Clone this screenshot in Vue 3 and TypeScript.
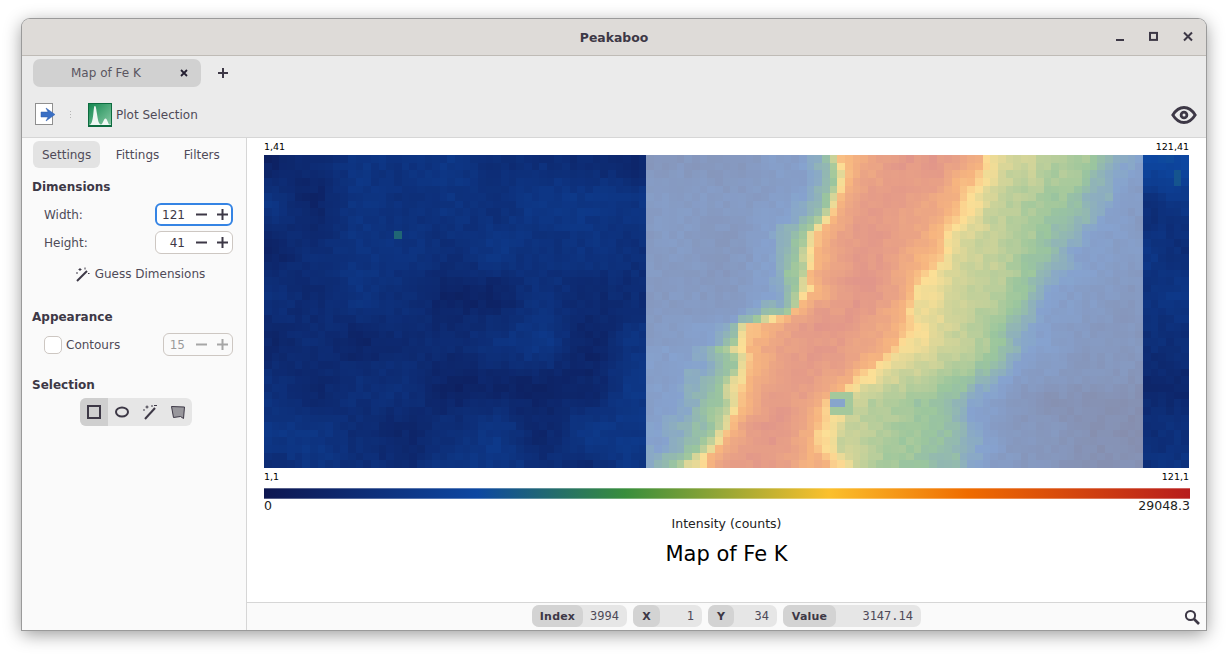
<template>
  <div class="desktop">
    <div class="window">
      <header class="titlebar">
        <span class="title">Peakaboo</span>
        <div class="wm-buttons">
          <svg width="12" height="12" viewBox="0 0 12 12"><rect x="2" y="8" width="8" height="2" fill="#3d3846" /></svg>
          <svg width="12" height="12" viewBox="0 0 12 12"><rect x="2" y="1.900" width="7" height="7" fill="none" stroke="#3d3846" stroke-width="2" /></svg>
          <svg width="12" height="12" viewBox="0 0 12 12"><path d="M2 1.500l8 8M10 1.500l-8 8" stroke="#3d3846" stroke-width="2" fill="none" /></svg>
        </div>
      </header>

      <div class="tabbar">
        <div class="doc-tab">
          <span class="doc-tab-label">Map of Fe K</span>
          <svg class="doc-tab-close" width="10" height="10" viewBox="0 0 10 10"><path d="M2 2l6 6M8 2l-6 6" stroke="#241f31" stroke-width="1.800" fill="none" /></svg>
        </div>
        <svg class="new-tab" width="12" height="12" viewBox="0 0 12 12"><path d="M6 1v10M1 6h10" stroke="#3d3846" stroke-width="2" fill="none" /></svg>
      </div>

      <div class="toolbar">
        <svg class="export-icon" width="21" height="23" viewBox="0 0 21 23">
          <rect x="0.500" y="0.500" width="17" height="21" fill="#fff" stroke="#8f8f8f" />
          <path d="M6 9H13L11 5L20 11.500L11 18L13 14H6z" fill="#3a6fc4" stroke="#2f5fae" stroke-width="0.500" />
        </svg>
        <div class="tool-sep"><i /><i /><i /></div>
        <svg class="plot-icon" width="24" height="24" viewBox="0 0 24 24">
          <defs>
            <linearGradient id="plotBg" x1="0" y1="0" x2="1" y2="1">
              <stop offset="0" stop-color="#12874f" />
              <stop offset="1" stop-color="#8acba6" />
            </linearGradient>
          </defs>
          <rect x="0.500" y="0.500" width="23" height="23" fill="url(#plotBg)" stroke="#0d6b3f" />
          <path d="M1 22C3.500 22 4.500 18 5.300 11S6 3 7 3s1.200 3 2 8 1.500 10.500 4 10.500c2 0 2.500-6 4.500-6s2.500 6 4 6H23v.5z" fill="#fff" opacity="0.900" />
          <rect x="0" y="22" width="24" height="2" fill="#0d6b3f" />
        </svg>
        <span class="plot-label">Plot Selection</span>
        <svg class="eye-icon" width="26" height="20" viewBox="0 0 26 20">
          <path d="M1.800 10C5 4.800 8.800 2.500 13 2.500s8 2.300 11.200 7.500C21 15.200 17.200 17.500 13 17.500S5 15.200 1.800 10z" fill="none" stroke="#3d3846" stroke-width="2.800" />
          <circle cx="13" cy="10" r="2.900" fill="none" stroke="#3d3846" stroke-width="2.800" />
        </svg>
      </div>

      <div class="content">
        <aside class="sidebar">
          <nav class="side-tabs">
            <button v-for="(tab, i) in sideTabs" :key="tab" class="side-tab" :class="{ active: i === 0 }">{{ tab }}</button>
          </nav>

          <h3 class="dim-head">Dimensions</h3>
          <div class="form-row first-row">
            <label>Width:</label>
            <div class="spinner focused">
              <span class="spin-value">121</span>
              <svg class="spin-btn" viewBox="0 0 11 11"><path d="M0 5.500h11" /></svg>
              <svg class="spin-btn" viewBox="0 0 11 11"><path d="M0 5.500h11M5.500 0v11" /></svg>
            </div>
          </div>
          <div class="form-row second-row">
            <label>Height:</label>
            <div class="spinner">
              <span class="spin-value">41</span>
              <svg class="spin-btn" viewBox="0 0 11 11"><path d="M0 5.500h11" /></svg>
              <svg class="spin-btn" viewBox="0 0 11 11"><path d="M0 5.500h11M5.500 0v11" /></svg>
            </div>
          </div>
          <button class="guess-btn">
            <svg width="15" height="15" viewBox="0 0 15 15">
              <path d="M2 14L12 4" stroke="#3d3846" stroke-width="2" fill="none" />
              <path d="M5 1v3M3.500 2.500h3M1 6h2M10 0.500v2M13 6.500h1.500" stroke="#3d3846" stroke-width="1" fill="none" />
            </svg>
            Guess Dimensions
          </button>

          <h3 class="appear-head">Appearance</h3>
          <div class="form-row contour-row">
            <span class="check-wrap"><span class="checkbox" />Contours</span>
            <div class="spinner disabled">
              <span class="spin-value">15</span>
              <svg class="spin-btn" viewBox="0 0 11 11"><path d="M0 5.500h11" /></svg>
              <svg class="spin-btn" viewBox="0 0 11 11"><path d="M0 5.500h11M5.500 0v11" /></svg>
            </div>
          </div>

          <h3 class="select-head">Selection</h3>
          <div class="select-tools">
            <button class="select-tool active">
              <svg width="16" height="16" viewBox="0 0 16 16"><rect x="2" y="2" width="12" height="12" fill="none" stroke="#3d3846" stroke-width="2" /></svg>
            </button>
            <button class="select-tool">
              <svg width="16" height="16" viewBox="0 0 16 16"><ellipse cx="8" cy="8" rx="6" ry="4.500" fill="none" stroke="#3d3846" stroke-width="2" /></svg>
            </button>
            <button class="select-tool">
              <svg width="16" height="16" viewBox="0 0 16 16">
                <path d="M3 15L13 4" stroke="#3d3846" stroke-width="2" fill="none" />
                <path d="M5 1.500v3M3.500 3h3M1 6h2M10 1v2M12 1.500h3" stroke="#3d3846" stroke-width="1" fill="none" />
              </svg>
            </button>
            <button class="select-tool">
              <svg width="16" height="16" viewBox="0 0 16 16"><path d="M1.500 2.500l13 .5-1 11.500-3-2-7 1z" fill="#98979c" stroke="#3d3846" stroke-width="1" /></svg>
            </button>
          </div>
        </aside>

        <main class="main">
          <div class="plot">
            <div class="corner-row top"><span>1,41</span><span>121,41</span></div>
            <canvas ref="mapCanvas" class="map" width="925" height="313" />
            <div class="corner-row bottom"><span>1,1</span><span>121,1</span></div>
            <div class="colorbar" />
            <div class="scale-row"><span>0</span><span>29048.3</span></div>
            <div class="axis-title">Intensity (counts)</div>
            <div class="map-title">Map of Fe K</div>
          </div>

          <footer class="statusbar">
            <span />
            <div class="readouts">
              <div v-for="item in readouts" :key="item.label" class="readout" :style="{ width: item.width + 'px' }">
                <b :style="{ width: item.labelWidth + 'px' }">{{ item.label }}</b>
                <span>{{ item.value }}</span>
              </div>
            </div>
            <svg class="search-icon" width="16" height="16" viewBox="0 0 16 16">
              <circle cx="6.500" cy="6.500" r="4.600" fill="none" stroke="#3d3846" stroke-width="2" />
              <path d="M10 10l5 5" stroke="#3d3846" stroke-width="2.600" fill="none" />
            </svg>
          </footer>
        </main>
      </div>
    </div>
  </div>
</template>

<script setup lang="ts">
import { onMounted, ref } from 'vue'

const sideTabs = ['Settings', 'Fittings', 'Filters']

const readouts = [
  { label: 'Index', value: '3994', width: 95, labelWidth: 51 },
  { label: 'X', value: '1', width: 69, labelWidth: 27 },
  { label: 'Y', value: '34', width: 69, labelWidth: 26 },
  { label: 'Value', value: '3147.14', width: 138, labelWidth: 53 },
]

const mapCanvas = ref<HTMLCanvasElement | null>(null)

type Stop = [number, number]
type Rgb = [number, number, number]

const COLS = 121
const ROWS = 41
const CELL_W = 925 / COLS
const CELL_H = 313 / ROWS

// colour scale used by the map, same stops as the .colorbar gradient
const spectrum: [number, Rgb][] = [
  [0, [13, 22, 80]],
  [0.23, [13, 71, 161]],
  [0.39, [56, 142, 60]],
  [0.61, [251, 192, 45]],
  [0.76, [239, 108, 0]],
  [1, [183, 28, 28]],
]

// hot band edges in page pixels, by page y
const leftEdge: Stop[] = [
  [155, 845], [200, 838], [215, 830], [235, 815], [260, 815], [275, 810], [290, 812], [305, 803],
  [316, 785], [325, 752], [345, 748], [360, 752], [385, 738], [420, 730], [440, 724], [455, 707], [468, 700],
]
const rightEdge: Stop[] = [
  [155, 985], [200, 955], [250, 938], [300, 915], [350, 900], [380, 860], [400, 835], [440, 820], [468, 825],
]
const fadeEdge: Stop[] = [
  [155, 1110], [200, 1085], [250, 1060], [320, 1020], [400, 975], [468, 975],
]

const lerpTable = (table: Stop[], x: number): number => {
  if (x <= table[0][0]) return table[0][1]
  for (let i = 1; i < table.length; i++) {
    if (x <= table[i][0]) {
      const [x0, y0] = table[i - 1]
      const [x1, y1] = table[i]
      return y0 + ((y1 - y0) * (x - x0)) / (x1 - x0)
    }
  }
  return table[table.length - 1][1]
}

const hash = (a: number, b: number): number => {
  const s = Math.sin(a * 127.1 + b * 311.7) * 43758.5453
  return s - Math.floor(s)
}

const smoothNoise = (x: number, y: number): number => {
  const xi = Math.floor(x)
  const yi = Math.floor(y)
  const fx = x - xi
  const fy = y - yi
  const u = fx * fx * (3 - 2 * fx)
  const v = fy * fy * (3 - 2 * fy)
  const top = hash(xi, yi) * (1 - u) + hash(xi + 1, yi) * u
  const bottom = hash(xi, yi + 1) * (1 - u) + hash(xi + 1, yi + 1) * u
  return top * (1 - v) + bottom * v
}

const intensity = (col: number, row: number): number => {
  if (col === 17 && row === 10) return 0.3
  if (col === 119 && (row === 2 || row === 3)) return 0.26
  if ((col === 74 || col === 75) && row === 32) return 0.24
  if (col >= 74 && col <= 76 && row >= 31 && row <= 33) return 0.41

  const jitter = hash(col, row) - 0.5
  const patch = smoothNoise(col / 6, row / 6) - 0.5

  // dark background either side of the sample
  if (col < 50) return 0.11 + patch * 0.1 + jitter * 0.03
  if (col >= 115) return 0.115 + patch * 0.08 + jitter * 0.03 + Math.max(0, 8 - row) * 0.012

  const px = 264 + (col + 0.5) * CELL_W + (smoothNoise(col / 2.5, row / 2.5) - 0.5) * 16
  const py = 155 + (row + 0.5) * CELL_H
  const left = lerpTable(leftEdge, py)
  const right = lerpTable(rightEdge, py)
  const fade = lerpTable(fadeEdge, py)

  let t: number
  if (px < left) {
    // the rise is steeper beside the upper part of the band
    const d = (left - px) * (py < 345 ? 1.5 : 1)
    t = lerpTable([[0, 0.62], [8, 0.55], [16, 0.42], [40, 0.3], [70, 0.2], [130, 0.15]], d)
  } else if (px <= right) {
    const u = (px - left) / (right - left)
    t = 0.69 + 0.22 * Math.pow(Math.sin(Math.PI * u), 0.6)
  } else {
    t = lerpTable([[0, 0.67], [0.08, 0.6], [0.3, 0.51], [0.6, 0.45], [0.85, 0.4], [1, 0.31], [1.3, 0.2], [1.8, 0.14]], (px - right) / (fade - right))
    // shoulder turns green towards the bottom of the map
    if (py > 370 && px > right + 20) t -= Math.min(0.07, (py - 370) * 0.002)
  }
  return t + patch * 0.05 + jitter * 0.05
}

const colourAt = (t: number): Rgb => {
  const v = Math.min(1, Math.max(0, t))
  for (let i = 1; i < spectrum.length; i++) {
    const [t1, c1] = spectrum[i]
    if (v <= t1) {
      const [t0, c0] = spectrum[i - 1]
      const f = (v - t0) / (t1 - t0)
      return [0, 1, 2].map((k) => c0[k] + (c1[k] - c0[k]) * f) as Rgb
    }
  }
  return spectrum[spectrum.length - 1][1]
}

onMounted(() => {
  const ctx = mapCanvas.value?.getContext('2d')
  if (!ctx) return
  for (let row = 0; row < ROWS; row++) {
    for (let col = 0; col < COLS; col++) {
      let rgb = colourAt(intensity(col, row))
      // the selected columns are washed out towards white
      if (col >= 50 && col < 115) rgb = rgb.map((c) => c * 0.5 + 127) as Rgb
      ctx.fillStyle = `rgb(${rgb.map(Math.round).join(',')})`
      const x0 = Math.round(col * CELL_W)
      const y0 = Math.round(row * CELL_H)
      ctx.fillRect(x0, y0, Math.round((col + 1) * CELL_W) - x0, Math.round((row + 1) * CELL_H) - y0)
    }
  }
})
</script>

<style>
html,
body {
  margin: 0;
  background: #fff;
  overflow: hidden;
}
</style>

<style scoped>
.desktop {
  box-sizing: border-box;
  width: 1228px;
  height: 655px;
  padding: 19px 22px 25px;
  font-family: "DejaVu Sans", sans-serif;
  font-size: 12px;
  color: #3d3846;
}

.window {
  height: 100%;
  display: flex;
  flex-direction: column;
  border-radius: 8px 8px 0 0;
  background: #ebebeb;
  box-shadow: 0 0 0 1px #9a9a9a, 0 4px 18px rgba(0, 0, 0, 0.42);
  overflow: hidden;
}

.titlebar {
  flex: none;
  height: 36px;
  display: flex;
  align-items: center;
  justify-content: center;
  position: relative;
  background: #dedbd8;
  border-bottom: 1px solid #bfbbb6;
}

.title {
  font-size: 12.400px;
  font-weight: 700;
}

.wm-buttons {
  position: absolute;
  right: 12px;
  top: 12px;
  display: flex;
  gap: 22px;
}

.tabbar {
  flex: none;
  height: 35px;
  display: flex;
  align-items: flex-start;
  padding: 3px 0 0 11px;
  box-sizing: border-box;
}

.doc-tab {
  box-sizing: border-box;
  width: 168px;
  height: 28px;
  display: flex;
  align-items: center;
  padding-left: 38px;
  border-radius: 7px;
  background: #d1d1d1;
}

.doc-tab-label {
  width: 108px;
  color: #5a5560;
}

.new-tab {
  margin: 8px 0 0 16px;
}

.toolbar {
  flex: none;
  box-sizing: border-box;
  height: 47px;
  display: flex;
  align-items: center;
  padding: 1px 9px 0 13px;
  border-bottom: 1px solid #d6d6d6;
}

.tool-sep {
  display: flex;
  flex-direction: column;
  gap: 2px;
  margin: 0 17px 0 14px;
}

.tool-sep i {
  width: 1px;
  height: 1px;
  background: #b5b5b5;
}

.plot-label {
  margin-left: 4px;
  color: #4f4a58;
}

.eye-icon {
  margin-left: auto;
}

.content {
  flex: 1;
  min-height: 0;
  display: flex;
}

.sidebar {
  flex: none;
  box-sizing: border-box;
  width: 225px;
  padding: 3px 13px 0 10px;
  background: #fafafa;
  border-right: 1px solid #d6d6d6;
}

.side-tabs {
  display: flex;
  gap: 6.500px;
  margin-left: 1px;
}

.side-tab {
  height: 27px;
  padding: 0 9px;
  border: 0;
  border-radius: 6px;
  background: transparent;
  color: #4f4a58;
  font: inherit;
}

.side-tab.active {
  background: #e3e3e3;
}

h3 {
  margin: 0;
  font-size: 12px;
  line-height: 16px;
  font-weight: 700;
}

.dim-head {
  margin-top: 11px;
}

.appear-head {
  margin-top: 22px;
}

.select-head {
  margin-top: 21px;
}

.form-row {
  display: flex;
  align-items: center;
  justify-content: space-between;
  padding-left: 12px;
  color: #4f4a58;
}

.first-row {
  margin-top: 8px;
  margin-bottom: -2px;
}

.second-row {
  margin-top: 7px;
}

.contour-row {
  margin-top: 8px;
}

.spinner {
  box-sizing: border-box;
  width: 78px;
  height: 23px;
  display: flex;
  align-items: center;
  justify-content: flex-end;
  padding-right: 4px;
  border: 1px solid #cdc7c2;
  border-radius: 6px;
  background: #fff;
  color: #3d3846;
}

.spinner.focused {
  border: 2px solid #3584e4;
  padding-right: 3px;
}

.spinner.disabled {
  width: 70px;
  background: #fafafa;
  color: #9a9a9a;
}

.spin-value {
  margin-right: 11px;
}

.spin-btn {
  width: 11px;
  height: 11px;
  margin-left: 10px;
  fill: none;
  stroke: #3d3846;
  stroke-width: 2;
}

.spin-value + .spin-btn {
  margin-left: 0;
}

.disabled .spin-btn {
  stroke: #a6a6a6;
}

.guess-btn {
  display: flex;
  align-items: center;
  justify-content: center;
  gap: 5px;
  width: 100%;
  height: 26px;
  margin-top: 7px;
  padding: 0 0 0 15px;
  border: 0;
  background: transparent;
  color: #4f4a58;
  font: inherit;
}

.check-wrap {
  display: flex;
  align-items: center;
  gap: 4px;
}

.checkbox {
  box-sizing: border-box;
  width: 18px;
  height: 18px;
  border: 1px solid #cdc7c2;
  border-radius: 5px;
  background: #fff;
}

.select-tools {
  display: flex;
  width: 112px;
  margin: 5px 0 0 48px;
  border-radius: 6px;
  background: #e6e6e6;
  overflow: hidden;
}

.select-tool {
  width: 28px;
  height: 28px;
  display: flex;
  align-items: center;
  justify-content: center;
  padding: 0;
  border: 0;
  background: transparent;
}

.select-tool.active {
  background: #cfcfcf;
}

.main {
  flex: 1;
  min-width: 0;
  display: flex;
  flex-direction: column;
  background: #fff;
}

.plot {
  flex: 1;
  padding: 0 17px;
  color: #000;
}

.corner-row {
  display: flex;
  justify-content: space-between;
  font-size: 9.500px;
  line-height: 11px;
}

.corner-row.top {
  padding-top: 3px;
  margin-bottom: 3px;
}

.corner-row.bottom {
  margin-top: 3px;
}

.map {
  display: block;
  width: 925px;
  height: 313px;
}

.colorbar {
  width: 926px;
  height: 11px;
  margin-top: 6px;
  background: linear-gradient(90deg, #0d1650 0%, #0d47a1 23%, #388e3c 39%, #fbc02d 61%, #ef6c00 76%, #b71c1c 100%);
  box-shadow: inset 0 1px 0 rgba(255, 255, 255, 0.3), inset 0 -1px 0 rgba(255, 255, 255, 0.3);
}

.scale-row {
  display: flex;
  justify-content: space-between;
  width: 926px;
  font-size: 12.500px;
  line-height: 13px;
  color: #222;
}

.axis-title {
  margin-top: 5px;
  font-size: 12.500px;
  line-height: 14px;
  text-align: center;
  color: #222;
}

.map-title {
  margin-top: 10px;
  font-size: 21px;
  line-height: 26px;
  text-align: center;
}

.statusbar {
  flex: none;
  box-sizing: border-box;
  height: 28px;
  display: grid;
  grid-template-columns: 1fr auto 1fr;
  align-items: center;
  background: #fafafa;
  border-top: 1px solid #d6d6d6;
}

.readouts {
  display: flex;
  gap: 6px;
  margin-top: -1px;
}

.readout {
  height: 22px;
  display: flex;
  align-items: center;
  justify-content: space-between;
  border-radius: 7px;
  background: #e6e6e6;
  font-family: "DejaVu Sans Mono", monospace;
  font-size: 12px;
  color: #4f4a58;
}

.readout b {
  height: 100%;
  display: flex;
  align-items: center;
  justify-content: center;
  border-radius: 7px;
  background: #d3d3d3;
  font-family: "DejaVu Sans", sans-serif;
  font-size: 11px;
  letter-spacing: 0.2px;
  color: #3d3846;
}

.readout span {
  padding-right: 8px;
}

.search-icon {
  justify-self: end;
  margin-right: 6px;
}
</style>
